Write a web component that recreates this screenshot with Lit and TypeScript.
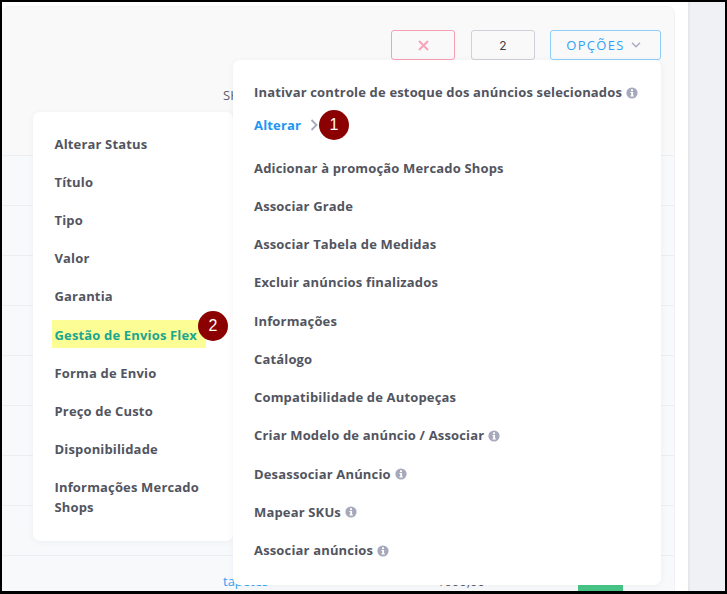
import { LitElement, html, css } from "lit";
import { customElement } from "lit/decorators.js";

const info = html`<svg class="info" viewBox="0 0 12 12" aria-hidden="true"><circle cx="6" cy="6" r="5.6" fill="#a6a8bc"/><rect x="5" y="2.3" width="2" height="1.8" fill="#fff"/><path d="M4.4 5h2.7v3.6h.8v1H4.4v-1h.8V6h-.8z" fill="#fff"/></svg>`;

const leftItems = ["Alterar Status","Título","Tipo","Valor","Garantia"];
const leftItems2 = ["Forma de Envio","Preço de Custo","Disponibilidade","Informações Mercado Shops"];
const rightItems: [string, boolean][] = [
  ["Adicionar à promoção Mercado Shops", false],
  ["Associar Grade", false],
  ["Associar Tabela de Medidas", false],
  ["Excluir anúncios finalizados", false],
  ["Informações", false],
  ["Catálogo", false],
  ["Compatibilidade de Autopeças", false],
  ["Criar Modelo de anúncio / Associar", true],
  ["Desassociar Anúncio", true],
  ["Mapear SKUs", true],
  ["Associar anúncios", true],
];

@customElement("app-root")
export class AppRoot extends LitElement {
  static styles = css`
    :host { display: block; width: 727px; height: 594px; font-family: "Open Sans", "Noto Sans", sans-serif; }
    * { box-sizing: border-box; }
    .frame { position: relative; width: 727px; height: 594px; overflow: hidden; background: #fff;
      border-style: solid; border-color: #000; border-width: 2px 2px 3px 2px; display: flex; }
    .main { flex: none; width: 686px; padding: 4px 0 0 0; display: flex; }
    .side { flex: 1; background: #f0f1f4; border-left: 2px solid #e6e7ea; }
    .card { flex: none; width: 673px; margin-right: 13px; display: flex; flex-direction: column; border-radius: 8px 8px 0 0;
      border-top: 1px solid #f2f2f4; border-right: 1px solid #f1f2f5; background: #f9f9f9; }
    .head { height: 148px; flex: none; padding: 23px 13px 0 0; display: flex; flex-direction: column; align-items: flex-end; }
    .btns { display: flex; gap: 16px; }
    .btn { height: 30px; border-radius: 3px; display: flex; align-items: center; justify-content: center; border: 1px solid; background: #f9f9f9; font-size: 13px; }
    .b-x { width: 64px; border-color: #f79fb4; }
    .b-n { width: 64px; border-color: #ced0da; color: #3c3e4a; font-family: "Inter", "Noto Sans", sans-serif; font-size: 12px; }
    .b-o { width: 111px; border-color: #8fcdfb; color: #2fa3f6; letter-spacing: 1.3px; gap: 6px; margin-left: -1px; padding-right: 4px; }
    .sk { align-self: flex-start; margin: 26px 0 0 221px; font-size: 13px; line-height: 18px; color: #5c5e6a; }
    .row { height: 50px; flex: none; background: #f8f9fb; border-top: 1px solid #eceef2; }
    .last { display: grid; grid-template-columns: 221px 214px 141px 45px; padding-top: 16px; font-size: 13px; line-height: 18px; }
    .last a { color: #2fa3f6; grid-column: 2; }
    .last .v { color: #5c5e6a; }
    .pill { grid-column: 4; height: 20px; background: #47c586; border-radius: 3px; margin-top: 7px; }
    .menu { position: absolute; background: #fff; border-radius: 7px; box-shadow: 0 1px 6px rgba(60,66,90,.06);
      display: flex; flex-direction: column; font-size: 13px; font-weight: 700; line-height: 20px; letter-spacing: .16px; color: #525560; }
    .m-l { left: 31px; top: 110px; width: 200px; height: 429px; padding: 22px 21px 0 21.5px; gap: 18.12px; }
    .m-r { left: 231px; top: 58px; width: 428px; height: 525px; padding: 22px 21px 0 21px; gap: 18.25px; }
    .it { display: flex; align-items: center; gap: 4px; }
    .m-r .it { white-space: nowrap; }
    .alterar { color: #2196f3; margin: -5px 0 4px; gap: 9px; }
    .flex { color: #1aa68f; position: relative; }
    .flex::before { content: ""; position: absolute; left: -3px; right: 6px; top: -5px; bottom: -3px; background: #fdfd96; }
    .flex span { position: relative; white-space: nowrap; }
    .info { width: 12px; height: 12px; flex: none; margin-top: 1px; }
    .badge { position: absolute; width: 30px; height: 30px; border-radius: 50%; background: #8b0000; color: #fff;
      display: flex; align-items: center; justify-content: center; font: 400 16px "Liberation Sans", Arial, sans-serif; }
    .b1 { left: 317px; top: 108px; }
    .b2 { left: 196px; top: 309px; }
  `;
  render() {
    return html`<div class="frame">
      <div class="main"><div class="card">
        <div class="head">
          <div class="btns">
            <div class="btn b-x"><svg width="11" height="11" viewBox="0 0 11 11"><path d="M1 1l9 9M10 1l-9 9" stroke="#f9a3b8" stroke-width="2" fill="none"/></svg></div>
            <div class="btn b-n">2</div>
            <div class="btn b-o">OPÇÕES <svg width="10" height="6" viewBox="0 0 10 6"><path d="M1 .8l4 4 4-4" stroke="#a6a8bc" stroke-width="1.3" fill="none"/></svg></div>
          </div>
          <div class="sk">SKU</div>
        </div>
        ${[0,1,2,3,4,5,6,7].map(() => html`<div class="row"></div>`)}
        <div class="row last"><a>tapetes</a><span class="v">1000,00</span><div class="pill"></div></div>
      </div></div>
      <div class="side"></div>
      <div class="menu m-l">
        ${leftItems.map(t => html`<div class="it">${t}</div>`)}
        <div class="it flex"><span>Gestão de Envios Flex</span></div>
        ${leftItems2.map(t => html`<div class="it">${t}</div>`)}
      </div>
      <div class="menu m-r">
        <div class="it">Inativar controle de estoque dos anúncios selecionados ${info}</div>
        <div class="it alterar">Alterar <svg width="9" height="12" viewBox="0 0 9 12"><path d="M1.5 1l5 5-5 5" stroke="#a6a8bc" stroke-width="1.8" fill="none"/></svg></div>
        ${rightItems.map(([t, i]) => html`<div class="it">${t}${i ? info : ""}</div>`)}
      </div>
      <div class="badge b1">1</div>
      <div class="badge b2">2</div>
    </div>`;
  }
}
